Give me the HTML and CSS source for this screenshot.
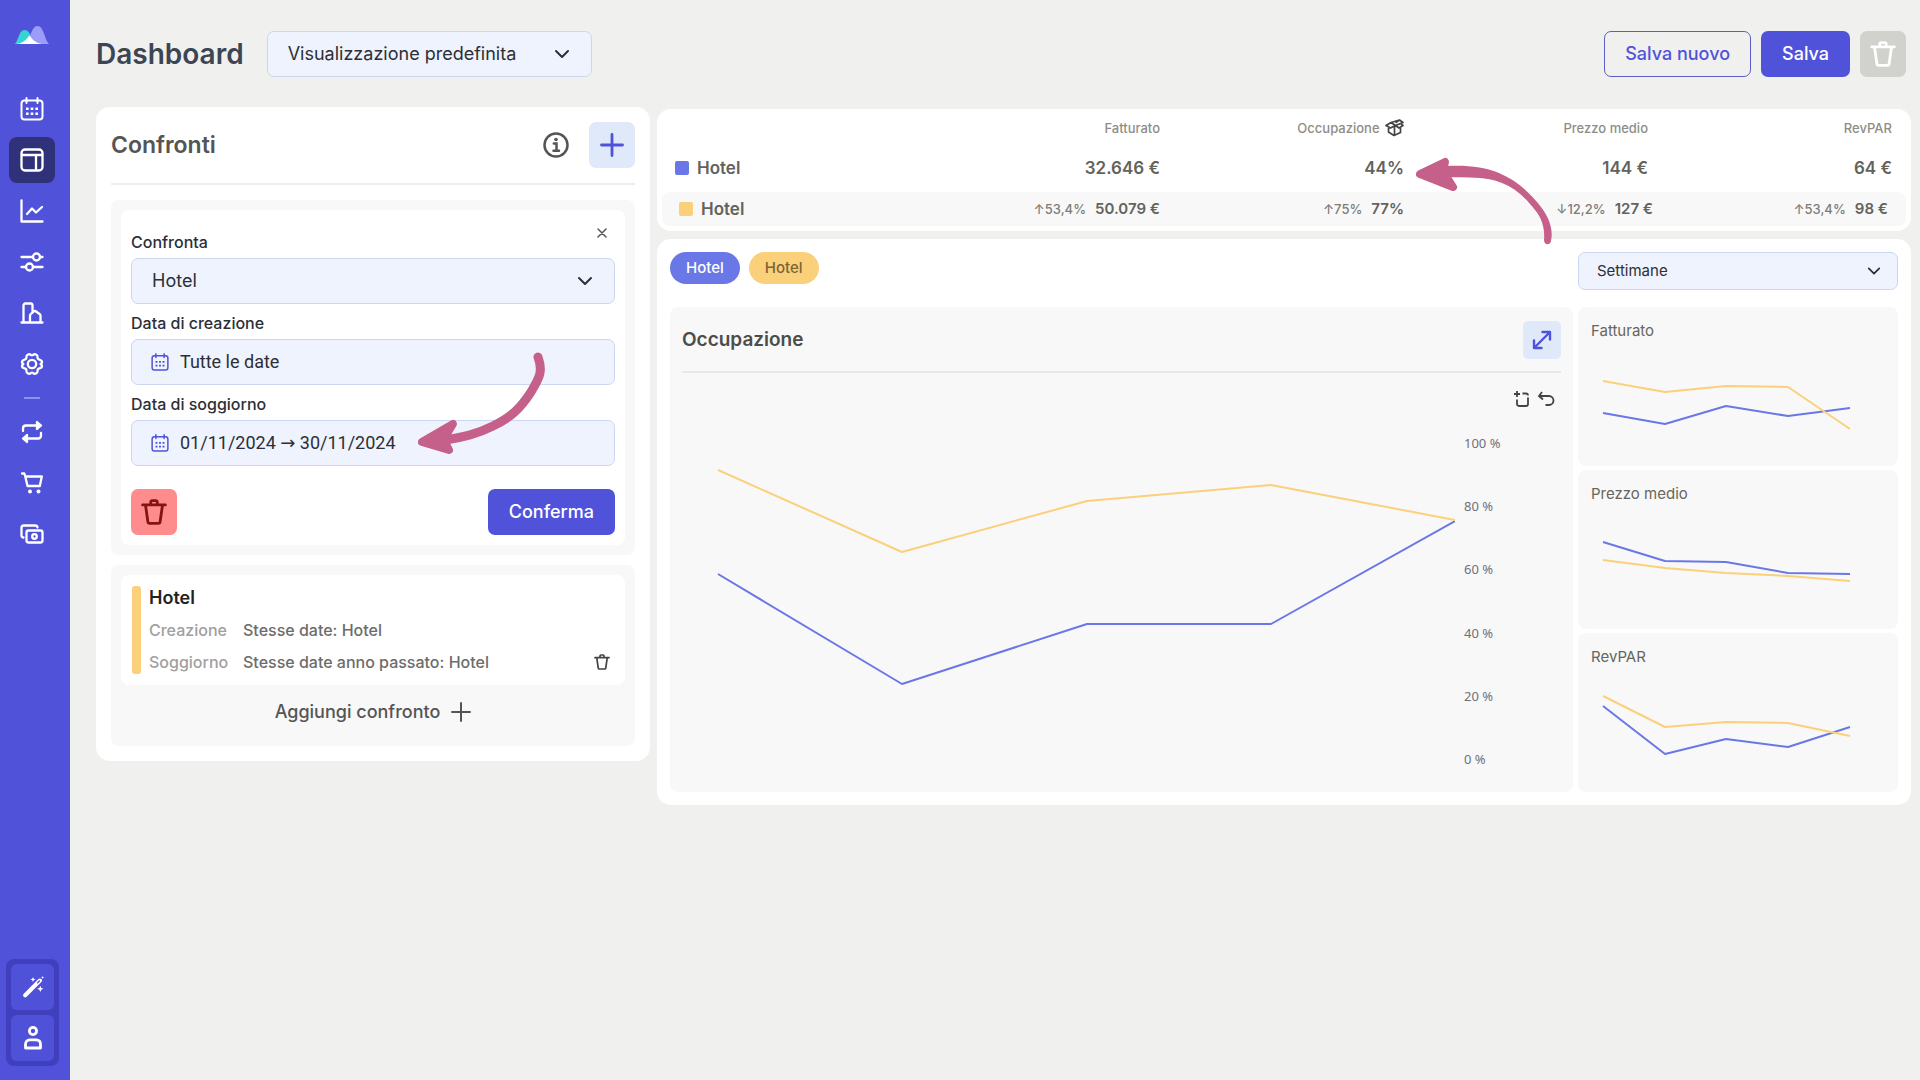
FILE: index.html
```html
<!DOCTYPE html>
<html lang="it">
<head>
<meta charset="utf-8">
<meta name="viewport" content="width=device-width, initial-scale=1">
<title>Dashboard</title>
<link rel="stylesheet" href="styles.css">
</head>
<body>
<svg class="defs" aria-hidden="true">
  <symbol id="i-calendar" viewBox="0 0 24 24"><g fill="none" stroke="currentColor" stroke-width="2" stroke-linecap="round"><rect x="1.500" y="3.500" width="21" height="19" rx="3"/><path d="M6.500 1v5M17.500 1v5"/></g><path fill="currentColor" d="M6 10.500h2.600v2.600H6zM10.700 10.500h2.600v2.600h-2.600zM15.400 10.500H18v2.600h-2.600zM6 15.500h2.600v2.600H6zM10.700 15.500h2.600v2.600h-2.600zM15.400 15.500H18v2.600h-2.600z"/></symbol>
  <symbol id="i-trash" viewBox="0 0 24 24"><g fill="none" stroke="currentColor" stroke-width="2.600" stroke-linecap="round" stroke-linejoin="round"><path d="M1.500 5.500h21M4.200 6l2.200 15.200c.1.900.5 1.300 1.400 1.300h8.400c.9 0 1.300-.4 1.400-1.300L19.800 6M9 5V3c0-.9.500-1.500 1.400-1.500h3.200c.9 0 1.400.6 1.400 1.500v2"/></g></symbol>
  <symbol id="i-chevron" viewBox="0 0 16 16"><path d="M2 5l6 6 6-6" fill="none" stroke="currentColor" stroke-width="2" stroke-linecap="round" stroke-linejoin="round"/></symbol>
  <symbol id="i-plus" viewBox="0 0 24 24"><path d="M12 1.500v21M1.500 12h21" fill="none" stroke="currentColor" stroke-width="2.800" stroke-linecap="round"/></symbol>
</svg>
<div class="app">
  <aside class="sidebar">
    <a class="logo" href="#" aria-label="Home">
      <svg width="34" height="18" viewBox="0 0 34 18"><path fill="#37d3d3" d="M0 18C4 13 4 4 9.500 4c3.500 0 5 3 6.500 6L7 18z"/><path fill="#9c9dfb" d="M10 18C16 14 16 0 22.500 0S29 13 34 18z"/><path fill="#fff" d="M2 18c6-1 9-4 12.500-8.500C17.500 14 21 17 27 18z"/></svg>
    </a>
    <nav class="nav">
      <a href="#" aria-label="Calendario"><svg class="i24"><use href="#i-calendar"/></svg></a>
      <a href="#" class="active" aria-label="Dashboard"><svg class="i24" viewBox="0 0 24 24"><g class="line"><rect x="1.500" y="1.500" width="21" height="21" rx="3.500"/><path d="M2 7h20M16 7v15"/></g></svg></a>
      <a href="#" aria-label="Andamento"><svg class="i24" viewBox="0 0 24 24"><path class="line" d="M1.500 1.500v21h21M7 15l5-5.500 4 4 6-5.500"/></svg></a>
      <a href="#" aria-label="Regole"><svg class="i24" viewBox="0 0 24 24"><g class="line"><path d="M1.500 7H13M20 7h2.500M1.500 17H6M13 17h9.500"/><circle cx="16.500" cy="7" r="3.500"/><circle cx="9.500" cy="17" r="3.500"/></g></svg></a>
      <a href="#" aria-label="Strutture"><svg class="i24" viewBox="0 0 24 24"><path class="line" d="M1.500 21.500h21M3.500 21.500v-17c0-1 .6-2 1.800-2h5.400c1.200 0 1.800 1 1.800 2v6M10 21.500v-6.800c0-.8.300-1.300.9-1.800l3.600-3 .8.100 4.300 3c.7.500.9 1 .9 1.800v6.700"/></svg></a>
      <a href="#" aria-label="Impostazioni"><svg class="i24" viewBox="0 0 24 24"><g class="line"><circle cx="12" cy="12" r="4.200"/><path d="M8 2.500c2.300-1 2.500.8 4 .8s1.700-1.800 4-.8c2.700 1.200 1 2.800 1.800 4.100.9 1.300 3.600.6 4.200 3 .4 2.200-1.400 1.700-1.400 2.400s1.800.2 1.400 2.400c-.6 2.400-3.300 1.700-4.200 3-.8 1.300.9 2.900-1.800 4.100-2.300 1-2.500-.8-4-.8s-1.700 1.800-4 .8c-2.700-1.200-1-2.800-1.800-4.100-.9-1.300-3.600-.6-4.200-3C1.600 12.200 3.400 12.700 3.400 12S1.600 11.800 2 9.600c.6-2.400 3.300-1.700 4.200-3C7 5.300 5.300 3.700 8 2.500z"/></g></svg></a>
      <hr>
      <a href="#" aria-label="Scambi"><svg class="i24" viewBox="0 0 24 24"><path class="line" d="M3 11V8.500c0-2 1-3 3-3h14M17 2l4 3.500L17 9zM21 13v2.500c0 2-1 3-3 3H4M7 15l-4 3.500L7 22z"/></svg></a>
      <a href="#" aria-label="Carrello"><svg class="i24" viewBox="0 0 24 24"><path class="line" d="M2 2.500h2.300l1 3 2.200 9.500h12.300M5.300 5.500h16.500l-2 9.500"/><circle cx="10" cy="20.500" r="2" fill="currentColor"/><circle cx="18.500" cy="20.500" r="2" fill="currentColor"/></svg></a>
      <a href="#" aria-label="Pagamenti"><svg class="i24" viewBox="0 0 24 24"><g class="line"><rect x="6.500" y="8.500" width="16" height="12" rx="2"/><path d="M3.500 15.500c-1.200 0-2-.8-2-2V6c0-1.400.8-2.500 2.200-2.500H15c1.500 0 2.500.5 2.500 2"/><circle cx="14.500" cy="14.500" r="2.300"/></g></svg></a>
    </nav>
    <div class="tools-nav">
      <button type="button" aria-label="Assistente"><svg width="22" height="22" viewBox="0 0 24 24"><path d="M3.500 21L19.500 5" stroke="currentColor" stroke-width="4.500" stroke-linecap="round"/><path d="M17 7.500L19 5.500" stroke="#4f51d8" stroke-width="1.500" stroke-linecap="round"/><path fill="currentColor" d="M20 10.500l1 2.500 2.500 1-2.500 1-1 2.500-1-2.500-2.500-1 2.500-1zM12 1l.8 2 2 .8-2 .8-.8 2-.8-2-2-.8 2-.8zM22.500 0l.5 1.200 1 .5-1 .5-.5 1.200-.5-1.200-1-.5 1-.5z"/></svg></button>
      <button type="button" aria-label="Profilo"><svg class="i24" viewBox="0 0 24 24"><g fill="none" stroke="currentColor" stroke-width="2.800" stroke-linejoin="round"><circle cx="12" cy="5" r="3.600"/><path d="M4.500 22V18.500c0-2.800 1.600-4.700 4.400-4.700h6.200c2.800 0 4.400 1.900 4.400 4.700V22z"/></g></svg></button>
    </div>
  </aside>

  <main class="main">
    <header class="topbar">
      <h1>Dashboard</h1>
      <div class="select view-select">
        <select aria-label="Visualizzazione"><option>Visualizzazione predefinita</option></select>
        <svg class="i16"><use href="#i-chevron"/></svg>
      </div>
      <div class="actions">
        <button type="button" class="btn outline">Salva nuovo</button>
        <button type="button" class="btn primary">Salva</button>
        <button type="button" class="btn square muted" aria-label="Elimina"><svg class="i26"><use href="#i-trash"/></svg></button>
      </div>
    </header>

    <div class="columns">
      <section class="card compare">
        <div class="compare-head">
          <h2>Confronti</h2>
          <svg class="info" width="26" height="26" viewBox="0 0 26 26"><circle cx="13" cy="13" r="11.500" fill="none" stroke="currentColor" stroke-width="2.500"/><circle cx="13" cy="7.500" r="1.800" fill="currentColor"/><path d="M10.800 11.500h2.700v6.700M10.500 18.800h5.500" fill="none" stroke="currentColor" stroke-width="2.500" stroke-linecap="round"/></svg>
          <button type="button" class="btn square soft" aria-label="Nuovo confronto"><svg class="i24"><use href="#i-plus"/></svg></button>
        </div>

        <div class="group">
          <form class="panel form">
            <button type="button" class="close" aria-label="Chiudi"><svg width="10" height="10" viewBox="0 0 10 10"><path d="M1 1l8 8M9 1L1 9" stroke="currentColor" stroke-width="1.500" stroke-linecap="round"/></svg></button>
            <label for="cmp">Confronta</label>
            <div class="select">
              <select id="cmp"><option>Hotel</option></select>
              <svg class="i16"><use href="#i-chevron"/></svg>
            </div>
            <label for="created">Data di creazione</label>
            <div class="field">
              <svg class="i18"><use href="#i-calendar"/></svg>
              <input id="created" type="text" readonly value="Tutte le date">
            </div>
            <label for="stay">Data di soggiorno</label>
            <div class="field">
              <svg class="i18"><use href="#i-calendar"/></svg>
              <input id="stay" type="text" readonly value="01/11/2024 → 30/11/2024">
              <svg class="arrow arrow-date" width="140" height="112" viewBox="412 348 140 112" aria-hidden="true"><path class="shaft" d="M539 357C544 371 541 377 532 392C521 409 511 418 494 426C478 434 465 437 446 440"/><path class="head" d="M423 442L454 424L446 437L447 444L450 450Z"/></svg>
            </div>
            <div class="form-actions">
              <button type="button" class="btn square danger" aria-label="Elimina confronto"><svg class="i26"><use href="#i-trash"/></svg></button>
              <button type="submit" class="btn primary">Conferma</button>
            </div>
          </form>
        </div>

        <div class="group">
          <div class="panel summary">
            <span class="bar"></span>
            <div class="summary-body">
              <h3>Hotel</h3>
              <dl>
                <dt>Creazione</dt><dd>Stesse date: Hotel</dd>
                <dt>Soggiorno</dt><dd>Stesse date anno passato: Hotel</dd>
              </dl>
            </div>
            <button type="button" class="remove" aria-label="Rimuovi"><svg class="i16"><use href="#i-trash"/></svg></button>
          </div>
          <button type="button" class="add">Aggiungi confronto <svg width="20" height="20" viewBox="0 0 20 20"><path d="M10 1v18M1 10h18" stroke="currentColor" stroke-width="2" stroke-linecap="round"/></svg></button>
        </div>
      </section>

      <div class="results">
        <section class="card totals">
          <table>
            <thead>
              <tr><th></th><th>Fatturato</th><th>Occupazione <svg class="box" width="19" height="18" viewBox="0 0 19 18"><g fill="none" stroke="currentColor" stroke-width="1.700" stroke-linejoin="round"><path d="M1 6.500L6 3.500l4.500 3L5.500 9zM6 3.500L14.500 1 18 3.500l-7.500 3M14.500 1L10.500 3.800M10.500 6.500L14 9l4-2.500-2-1.700M3.500 9v4L9 16.500l6.500-3V9M9.500 8v8"/></g></svg></th><th>Prezzo medio</th><th>RevPAR</th></tr>
            </thead>
            <tbody>
              <tr class="base"><th><span class="swatch blue"></span>Hotel</th><td>32.646 €</td><td>44%</td><td>144 €</td><td>64 €</td></tr>
              <tr class="other"><th><span class="swatch yellow"></span>Hotel</th><td><small>↑53,4%</small>50.079 €</td><td><small>↑75%</small>77%</td><td><small>↓12,2%</small>127 €</td><td><small>↑53,4%</small>98 €</td></tr>
            </tbody>
          </table>
          <svg class="arrow arrow-table" width="146" height="98" viewBox="1412 152 146 98" aria-hidden="true"><path d="M1447 166C1467 165 1485 167 1499 173C1518 181 1531 194 1541 207C1551 220 1553 232 1551 241C1550 246 1544 245 1544 240C1545 229 1542 218 1535 210C1525 197 1515 188 1502 183C1486 176 1466 178 1447 177Z"/><path class="head" d="M1420 174L1445 162L1443 171L1453 187Z"/></svg>
        </section>

        <section class="card charts">
          <div class="charts-head">
            <button type="button" class="chip blue">Hotel</button>
            <button type="button" class="chip yellow">Hotel</button>
            <div class="select period">
              <select aria-label="Periodo"><option>Settimane</option></select>
              <svg class="i16"><use href="#i-chevron"/></svg>
            </div>
          </div>
          <div class="charts-grid">
            <div class="chart-main">
              <div class="chart-title">
                <h2>Occupazione</h2>
                <button type="button" class="expand" aria-label="Espandi"><svg width="20" height="20" viewBox="0 0 20 20"><path d="M2.500 17.500l15-15M10.500 2h7.500v7.500M2 10.500V18h7.500" fill="none" stroke="currentColor" stroke-width="2.400" stroke-linecap="round" stroke-linejoin="round"/></svg></button>
              </div>
              <div class="chart-tools">
                <button type="button" aria-label="Zoom"><svg width="18" height="18" viewBox="0 0 18 18"><path d="M1 4h6M4 1v6M9.500 3.500H13c1.300 0 2 .7 2 2M15 7.500V14c0 1.300-.7 2-2 2H6c-1.300 0-2-.7-2-2V9.500" fill="none" stroke="currentColor" stroke-width="1.800"/></svg></button>
                <button type="button" aria-label="Ripristina"><svg width="18" height="18" viewBox="0 0 18 18"><path d="M5 2L2 6l4 3.500M2.500 6H12c2.500 0 4.500 2 4.500 4.500S14.500 15 12 15H8.500" fill="none" stroke="currentColor" stroke-width="1.800"/></svg></button>
              </div>
              <div class="plot">
                <svg class="lines" viewBox="0 0 773 334" preserveAspectRatio="none"><polyline class="blue" points="36,140 220,250 405,190 589,190 773,87"/><polyline class="yellow" points="36,36 220,118 405,67 589,51 773,86"/></svg>
                <div class="axis"><span>100 %</span><span>80 %</span><span>60 %</span><span>40 %</span><span>20 %</span><span>0 %</span></div>
              </div>
            </div>
            <div class="chart-side">
              <div class="mini"><h3>Fatturato</h3><svg class="lines" viewBox="0 0 294 106" preserveAspectRatio="none"><polyline class="blue" points="12,66 74,77 135,59 197,69 259,61"/><polyline class="yellow" points="12,34 74,45 135,39 197,40 259,82"/></svg></div>
              <div class="mini"><h3>Prezzo medio</h3><svg class="lines" viewBox="0 0 294 106" preserveAspectRatio="none"><polyline class="yellow" points="12,50 74,58 135,63 197,66 259,71"/><polyline class="blue" points="12,32 74,51 135,52 197,63 259,64"/></svg></div>
              <div class="mini"><h3>RevPAR</h3><svg class="lines" viewBox="0 0 294 106" preserveAspectRatio="none"><polyline class="blue" points="12,33 74,81 135,66 197,74 259,54"/><polyline class="yellow" points="12,23 74,54 135,49 197,50 259,63"/></svg></div>
            </div>
          </div>
        </section>
      </div>
    </div>
  </main>
</div>
</body>
</html>
```
FILE: styles.css
```css
* { box-sizing: border-box; }
body { margin: 0; background: #f0f0ef; color: #2c2f36; font: 400 18px/24px Inter, "Liberation Sans", sans-serif; }
h1, h2, h3, dl, dd { margin: 0; }
button, select, input { font: inherit; color: inherit; }
button { border: 0; padding: 0; background: none; cursor: pointer; }
svg { display: block; flex: none; }
.defs { position: absolute; width: 0; height: 0; }
.i16 { width: 16px; height: 16px; }
.i18 { width: 18px; height: 18px; }
.i24 { width: 24px; height: 24px; }
.i26 { width: 26px; height: 26px; }
.line { fill: none; stroke: currentColor; stroke-width: 2.3; stroke-linecap: round; stroke-linejoin: round; }

.app { display: flex; min-height: 100vh; }

.sidebar { width: 70px; flex: none; display: flex; flex-direction: column; background: #5053d9; color: #fff; padding: 26px 0 14px; }
.logo { margin: 0 0 42px 15px; }
.nav { display: flex; flex-direction: column; gap: 5px; padding-left: 9px; }
.nav a { width: 46px; height: 46px; border-radius: 8px; color: #fff; display: grid; place-items: center; }
.nav a.active { background: #2f3278; }
.nav hr { width: 16px; height: 2px; margin: 5px 15px; border: 0; background: #8f92ec; }
.tools-nav { margin: auto 0 0 6px; width: 53px; padding: 5px; display: flex; flex-direction: column; gap: 5px; border-radius: 8px; background: #403fbd; }
.tools-nav button { height: 46px; border-radius: 6px; background: #4f51d8; color: #fff; display: grid; place-items: center; }

.main { flex: 1; min-width: 0; padding: 31px 9px 31px 26px; }
.topbar { display: flex; align-items: center; padding-right: 5px; margin-bottom: 30px; }
h1 { font-size: 28px; line-height: 46px; font-weight: 600; color: #3c4653; margin-right: 23px; }
.actions { display: flex; gap: 10px; margin-left: auto; }

.btn { height: 46px; padding: 0 21px; border-radius: 7px; font-weight: 500; display: grid; place-items: center; }
.btn.outline { border: 1px solid #5b5ec4; color: #5053d9; padding: 0 20px; }
.btn.primary { background: #5053d9; color: #fff; }
.btn.square { width: 46px; padding: 0; }
.btn.muted { background: #d1d1ce; color: #fff; }
.btn.soft { background: #e0e9fa; color: #5053d9; }
.btn.danger { background: #ff8c8c; color: #861212; }

.select, .field { height: 46px; border: 1px solid #cbd6f1; border-radius: 7px; background: #eff3fd; }
.select { display: grid; align-items: center; }
.select > * { grid-area: 1 / 1; }
.select select { appearance: none; width: 100%; height: 100%; border: 0; background: none; padding: 0 40px 0 20px; }
.select svg { justify-self: end; margin-right: 21px; pointer-events: none; }
.view-select { width: 325px; }
.field { position: relative; display: flex; align-items: center; gap: 11px; padding: 0 19px; color: #5053d9; }
.field input { flex: 1; min-width: 0; border: 0; padding: 0; background: none; color: #2c2f36; font-family: Roboto, "DejaVu Sans", sans-serif; }

.columns { display: grid; grid-template-columns: 554px minmax(0, 1fr); gap: 7px; align-items: start; }
.card { background: #fff; border-radius: 14px; }

.compare { padding: 15px; }
.compare-head { display: flex; align-items: center; gap: 20px; padding-bottom: 15px; border-bottom: 2px solid #ededed; margin-bottom: 15px; }
.compare-head h2 { flex: 1; font-size: 23px; font-weight: 600; color: #555; }
.info { color: #555; }
.group { padding: 10px; border-radius: 8px; background: #f8f8f8; }
.group + .group { margin-top: 10px; padding-bottom: 8px; }
.panel { background: #fff; border-radius: 8px; }
.form { position: relative; display: flex; flex-direction: column; padding: 13px 10px 10px; }
.form label { margin: 7px 0 4px; font-size: 16px; font-weight: 500; }
.close { position: absolute; top: 13px; right: 13px; width: 20px; height: 20px; display: grid; place-items: center; color: #555; }
.form-actions { display: flex; justify-content: space-between; margin-top: 23px; }

.summary { display: flex; gap: 8px; padding: 11px 12px 11px 11px; }
.bar { width: 9px; border-radius: 3px; background: #fbd07b; }
.summary-body { flex: 1; display: flex; flex-direction: column; gap: 8px; }
.summary h3 { font-size: 18px; font-weight: 600; color: #222; }
.summary dl { display: grid; grid-template-columns: 86px 1fr; gap: 8px; font-size: 16px; font-weight: 500; color: #6c6c6c; }
.summary dt { color: #a0a0a0; }
.remove { align-self: flex-end; height: 24px; padding: 0 3px; color: #444; }
.add { width: 100%; height: 53px; display: flex; align-items: center; justify-content: center; gap: 11px; font-weight: 500; color: #555; }

.results { display: flex; flex-direction: column; gap: 8px; padding-top: 2px; }
.totals { position: relative; padding: 4px 5px 5px; }
.totals table { width: 100%; border-collapse: separate; border-spacing: 0; table-layout: fixed; color: #63635d; }
.totals th, .totals td { padding: 0 14px 0 0; text-align: right; font-weight: 600; }
.totals th:not(:first-child), .totals td { width: 244px; }
.totals thead th { height: 31px; padding-bottom: 2px; font-size: 13px; font-weight: 500; color: #8e8e86; }
.box { display: inline-block; vertical-align: middle; margin: -2px 0 0 2px; color: #444; }
.totals tbody th { text-align: left; padding-left: 13px; font-size: 17px; }
.base > * { height: 48px; font-size: 17px; }
.other > * { height: 34px; font-size: 15px; background: #f8f8f8; }
.totals .other th { padding-left: 17px; border-radius: 8px 0 0 8px; }
.totals .other td:nth-child(4) { padding-right: 9px; }
.totals .other td:last-child { padding-right: 18px; border-radius: 0 8px 8px 0; }
.other small { margin-right: 9px; font-size: 13px; font-weight: 500; color: #7d7d78; }
.swatch { display: inline-block; width: 14px; height: 14px; margin-right: 8px; border-radius: 2px; vertical-align: -1px; }
.blue.swatch, .chip.blue { background: #6a77e6; color: #fff; }
.yellow.swatch, .chip.yellow { background: #fbd07b; color: #7b6438; }

.charts { padding: 13px; }
.charts-head { display: flex; align-items: flex-start; gap: 9px; margin-bottom: 17px; }
.chip { height: 32px; padding: 0 16px; border-radius: 16px; font-size: 15px; font-weight: 500; }
.period { width: 320px; height: 38px; margin-left: auto; font-size: 15px; }
.period select { padding-left: 18px; }
.period svg { width: 14px; height: 14px; margin-right: 16px; }
.charts-grid { display: grid; grid-template-columns: minmax(0, 1fr) 320px; gap: 5px; }
.chart-main, .mini { background: #f8f8f8; border-radius: 8px; }
.chart-main { padding: 14px 12px 23px; display: flex; flex-direction: column; }
.chart-title { display: flex; align-items: center; justify-content: space-between; padding-bottom: 12px; border-bottom: 2px solid #e8e8e8; }
.chart-title h2 { font-size: 19px; font-weight: 600; color: #4c4c4c; }
.expand { width: 38px; height: 38px; border-radius: 5px; background: #e0e9fa; color: #5053d9; display: grid; place-items: center; }
.chart-tools { display: flex; justify-content: flex-end; gap: 6px; padding: 17px 6px 26px; color: #444; }
.plot { flex: 1; display: flex; gap: 9px; }
.plot .lines { flex: 1; min-width: 0; height: 334px; }
.axis { width: 97px; height: 334px; display: flex; flex-direction: column; justify-content: space-between; font: 13px/18px "Noto Sans", sans-serif; color: #6e7079; }
.chart-side { display: flex; flex-direction: column; gap: 4px; }
.mini { padding: 12px 13px 13px; }
.mini h3 { font-size: 15px; line-height: 24px; font-weight: 400; color: #66665c; margin-bottom: 4px; }
.mini .lines { width: 100%; height: 106px; }
.lines polyline { fill: none; stroke-width: 2; vector-effect: non-scaling-stroke; stroke-linejoin: bevel; }
.lines .blue { stroke: #6a77e6; }
.lines .yellow { stroke: #fbd07b; }

.arrow { position: absolute; fill: #c5608a; pointer-events: none; }
.arrow .head { stroke: #c5608a; stroke-width: 8; stroke-linejoin: round; }
.arrow .shaft { fill: none; stroke: #c5608a; stroke-width: 9; stroke-linecap: round; }
.arrow-date { left: 279px; top: -73px; }
.arrow-table { right: 353px; top: 43px; }
```
